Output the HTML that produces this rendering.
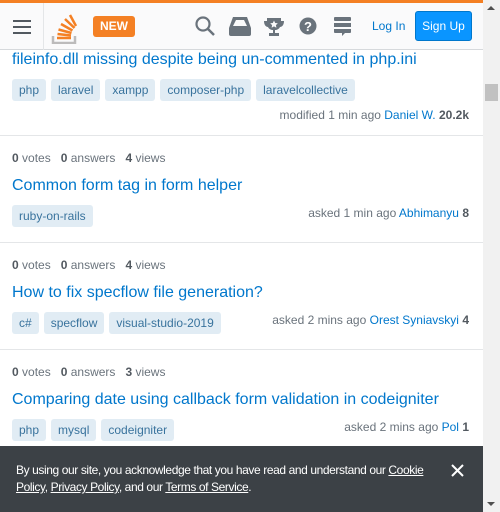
<!DOCTYPE html><html><head><style>
*{margin:0;padding:0;box-sizing:border-box}
body{width:500px;height:512px;overflow:hidden;font-family:"Liberation Sans",Arial,sans-serif;background:#fff;position:relative}
.a{position:absolute}
.sb{left:483px;top:0;width:17px;height:512px;background:#f1f1f1}
.top{left:0;top:0;width:483px;height:3px;background:#f48024}
.hdr{left:0;top:3px;width:483px;height:47px;background:#fafafb;border-bottom:1px solid #d6d9dc}
.t{font-size:16px;color:#0077cc;white-space:nowrap}
.tag{display:inline-block;background:#e1ecf4;color:#39739d;font-size:12px;padding:0 7px;height:22px;line-height:22px;border-radius:3px;margin-right:5px}
.tags{white-space:nowrap}
.m{font-size:12px;color:#6a737c;white-space:nowrap;text-align:right}
.m a{color:#0077cc;text-decoration:none}.m b{color:#525960}
.st{font-size:12px;color:#6a737c}.st b{color:#525960}
.sep{left:0;width:483px;height:1px;background:#e4e6e8}
.ck{left:0;top:446px;width:483px;height:66px;background:#3c4146;color:#fff;font-size:12px;line-height:17px;letter-spacing:-0.4px}
.ck u{color:#fff}
</style></head><body>
<div class="a sb"></div>
<div class="a" style="left:487px;top:6px;width:0;height:0;border:4px solid transparent;border-bottom-color:#505050;border-top:0"></div>
<div class="a" style="left:485px;top:84px;width:13px;height:17px;background:#c1c1c1"></div>
<div class="a" style="left:487px;top:502px;width:0;height:0;border:4px solid transparent;border-top-color:#505050;border-bottom:0"></div>
<div class="a top"></div>
<div class="a hdr"></div>
<div class="a" style="left:13px;top:20px;width:18px;height:2px;background:#525960;box-shadow:0 6px 0 #525960,0 12px 0 #525960"></div>
<div class="a" style="left:43px;top:3px;width:1px;height:47px;background:#e4e6e8"></div>
<svg class="a" style="left:50px;top:10px" width="30" height="34" viewBox="0 0 30 34"><path d="M3 26v7h22v-7" fill="none" stroke="#bcbbbb" stroke-width="2.5"/><g stroke="#f48024" stroke-width="2.5"><path d="M7 28h14M7.5 24l13.5 1.5M8.5 19.5l13 3.5M11 14l11.5 6.5M15 9l9.5 9M20 5l6 11"/></g></svg>
<div class="a" style="left:93px;top:16px;width:42px;height:21px;background:#f48024;border-radius:3px;color:#fff;font-weight:bold;font-size:12px;text-align:center;line-height:21px">NEW</div>
<svg class="a" style="left:194px;top:15px" width="22" height="22"><circle cx="9" cy="9" r="6.5" fill="none" stroke="#6a737c" stroke-width="2.2"/><path d="M14 14l6 6" stroke="#6a737c" stroke-width="2.5"/></svg>
<svg class="a" style="left:228px;top:15px" width="24" height="22"><path d="M5 2h14l4 11v6a2 2 0 0 1-2 2H3a2 2 0 0 1-2-2v-6z" fill="#6a737c"/><path d="M5 11h14l-3-6H8z" fill="#fafafb"/></svg>
<svg class="a" style="left:264px;top:17px" width="20" height="20"><path d="M3 1h14v3h3c0 4-2 6-4 6-1 2-3 3-5 3v3h4v3H5v-3h4v-3c-2 0-4-1-5-3-2 0-4-2-4-6h3z" fill="#6a737c"/><path d="M10 3.5l1.2 2.5 2.6.3-1.9 1.8.5 2.6-2.4-1.3-2.4 1.3.5-2.6-1.9-1.8 2.6-.3z" fill="#fafafb"/></svg>
<svg class="a" style="left:299px;top:17px" width="20" height="20"><circle cx="9" cy="9" r="8.5" fill="#6a737c"/><text x="9" y="14" fill="#fff" font-size="13" font-weight="bold" text-anchor="middle" font-family="Liberation Sans">?</text></svg>
<svg class="a" style="left:333px;top:16px" width="20" height="22"><rect x="1" y="1" width="17" height="4" rx="1" fill="#6a737c"/><rect x="1" y="7" width="17" height="4" fill="#6a737c"/><path d="M1 13h17v3a1 1 0 0 1-1 1h-5l-3 3v-3H2a1 1 0 0 1-1-1z" fill="#6a737c"/></svg>
<div class="a" style="left:372px;top:19px;font-size:12px;color:#0077cc">Log In</div>
<div class="a" style="left:415px;top:11px;width:57px;height:30px;background:#0a95ff;border:1px solid #0077cc;border-radius:3px;color:#fff;font-size:12px;text-align:center;line-height:28px">Sign Up</div>

<div class="a t" style="left:12px;top:51px">fileinfo.dll missing despite being un-commented in php.ini</div>
<div class="a tags" style="left:12px;top:79px"><span class="tag">php</span><span class="tag">laravel</span><span class="tag">xampp</span><span class="tag">composer-php</span><span class="tag">laravelcollective</span></div>
<div class="a m" style="right:31px;top:108px">modified 1 min ago <a>Daniel W.</a> <b>20.2k</b></div>
<div class="a sep" style="top:135px"></div>

<div class="a st" style="left:12px;top:151px"><b>0</b> votes &nbsp;&nbsp;<b>0</b> answers &nbsp;&nbsp;<b>4</b> views</div>
<div class="a t" style="left:12px;top:177px">Common form tag in form helper</div>
<div class="a tags" style="left:12px;top:205px"><span class="tag">ruby-on-rails</span></div>
<div class="a m" style="right:31px;top:206px">asked 1 min ago <a>Abhimanyu</a> <b>8</b></div>
<div class="a sep" style="top:242px"></div>

<div class="a st" style="left:12px;top:258px"><b>0</b> votes &nbsp;&nbsp;<b>0</b> answers &nbsp;&nbsp;<b>4</b> views</div>
<div class="a t" style="left:12px;top:284px">How to fix specflow file generation?</div>
<div class="a tags" style="left:12px;top:312px"><span class="tag">c#</span><span class="tag">specflow</span><span class="tag">visual-studio-2019</span></div>
<div class="a m" style="right:31px;top:313px">asked 2 mins ago <a>Orest Syniavskyi</a> <b>4</b></div>
<div class="a sep" style="top:349px"></div>

<div class="a st" style="left:12px;top:365px"><b>0</b> votes &nbsp;&nbsp;<b>0</b> answers &nbsp;&nbsp;<b>3</b> views</div>
<div class="a t" style="left:12px;top:391px">Comparing date using callback form validation in codeigniter</div>
<div class="a tags" style="left:12px;top:419px"><span class="tag">php</span><span class="tag">mysql</span><span class="tag">codeigniter</span></div>
<div class="a m" style="right:31px;top:420px">asked 2 mins ago <a>Pol</a> <b>1</b></div>

<div class="a ck"><div style="position:absolute;left:16px;top:16px;width:408px">By using our site, you acknowledge that you have read and understand our <u>Cookie Policy</u>, <u>Privacy Policy</u>, and our <u>Terms of Service</u>.</div>
<svg style="position:absolute;left:451px;top:18px" width="13" height="13"><path d="M1 1l11 11M12 1L1 12" stroke="#fff" stroke-width="2"/></svg></div>
</body></html>
